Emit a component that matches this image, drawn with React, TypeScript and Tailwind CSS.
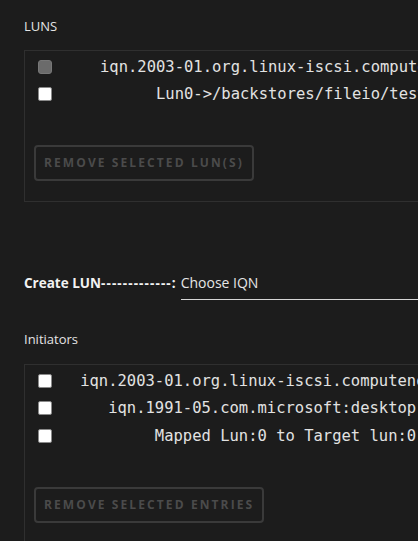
import React from 'react';

type Row = { label: string; disabled?: boolean };

const lunRows: Row[] = [
  { label: 'iqn.2003-01.org.linux-iscsi.computenode:tgt01', disabled: true },
  { label: 'Lun0->/backstores/fileio/test.img' },
];

const initiatorRows: Row[] = [
  { label: 'iqn.2003-01.org.linux-iscsi.computenode:sn01' },
  { label: 'iqn.1991-05.com.microsoft:desktop-7k3q' },
  { label: 'Mapped Lun:0 to Target lun:0' },
];

function Checkbox({ disabled }: { disabled?: boolean }) {
  return (
    <span
      className={
        disabled
          ? 'block w-[14px] h-[14px] rounded-[3px] bg-[#6b6b6b] border border-[#777]'
          : 'block w-[14px] h-[14px] rounded-[2px] bg-white border border-[#8a8a8a]'
      }
    />
  );
}

function EntryTable({ rows, cellWidth, button }: { rows: Row[]; cellWidth: string; button: string }) {
  return (
    <div className="w-[700px] border border-[#2f2f2f] pt-[2px] pb-[20px]">
      {rows.map((r) => (
        <div key={r.label} className="flex items-center h-[27.5px] pl-[13px]">
          <Checkbox disabled={r.disabled} />
          <div
            className={`${cellWidth} ml-[8px] text-center whitespace-nowrap text-[#e2e2e2] text-[15.5px] leading-[20px]`}
            style={{ fontFamily: '"DejaVu Sans Mono", "Liberation Mono", monospace' }}
          >
            {r.label}
          </div>
        </div>
      ))}
      <button
        disabled
        className="ml-[9px] mt-[37px] h-[36px] px-[8px] border-2 border-[#3a3a3a] rounded-[4px] text-[12px] font-bold tracking-[2.1px] text-[#4b4b4b] uppercase"
      >
        {button}
      </button>
    </div>
  );
}

export default function App() {
  return (
    <div
      className="w-screen h-screen overflow-hidden bg-[#1c1c1c] pl-[24px] pt-[17px]"
      style={{ fontFamily: '"Open Sans", "Noto Sans", sans-serif' }}
    >
      <div className="text-[13px] leading-[18px] text-[#e4e4e4]">LUNS</div>
      <div className="mt-[15px]">
        <EntryTable rows={lunRows} cellWidth="w-[500px]" button="Remove selected LUN(s)" />
      </div>

      <div className="mt-[71px] flex items-start">
        <div className="text-[13.5px] leading-[20px] font-bold text-[#f2f2f2] whitespace-nowrap">
          Create LUN<span className="tracking-[1.1px]">-------------</span>:
        </div>
        <div className="ml-[5px] w-[400px] border-b border-[#d6d6d6] pb-[6px] text-[14px] leading-[20px] text-[#e6e6e6]">
          Choose IQN
        </div>
      </div>

      <div className="mt-[30px] text-[13px] leading-[18px] text-[#e4e4e4]">Initiators</div>
      <div className="mt-[16px]">
        <EntryTable rows={initiatorRows} cellWidth="w-[451px]" button="Remove selected entries" />
      </div>
    </div>
  );
}
